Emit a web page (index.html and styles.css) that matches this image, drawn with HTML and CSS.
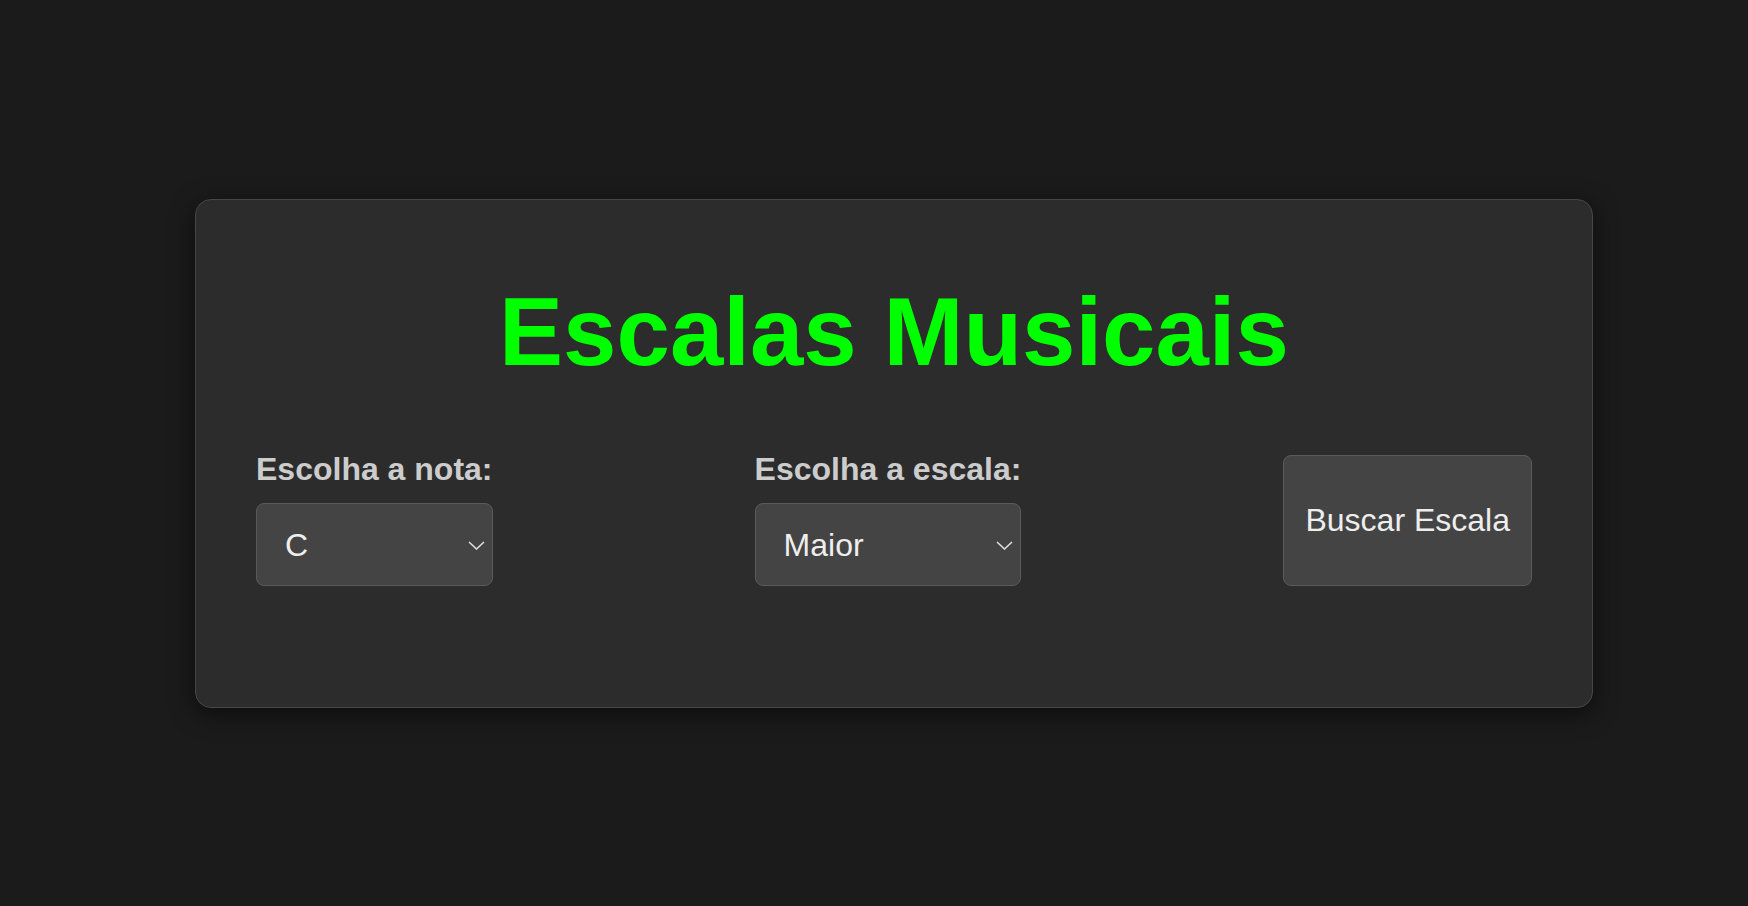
FILE: index.html
```html
<!DOCTYPE html>
<html lang="pt">
<head>
<meta charset="utf-8">
<title>Escalas Musicais</title>
<link rel="stylesheet" href="styles.css">
</head>
<body>
  <main class="card">
    <h1 class="title">Escalas Musicais</h1>
    <div class="controls">
      <div class="field">
        <label class="field-label" for="nota">Escolha a nota:</label>
        <div class="select-wrap">
          <select id="nota" class="field-select">
            <option>C</option>
            <option>C#</option>
            <option>D</option>
            <option>D#</option>
            <option>E</option>
            <option>F</option>
            <option>F#</option>
            <option>G</option>
            <option>G#</option>
            <option>A</option>
            <option>A#</option>
            <option>B</option>
          </select>
          <svg class="chevron" width="17" height="9" viewBox="0 0 17 9" aria-hidden="true"><path d="M1 1 L8.5 8 L16 1" fill="none" stroke="#dcdcdc" stroke-width="1.6"/></svg>
        </div>
      </div>
      <div class="field">
        <label class="field-label" for="escala">Escolha a escala:</label>
        <div class="select-wrap">
          <select id="escala" class="field-select">
            <option>Maior</option>
            <option>Menor</option>
          </select>
          <svg class="chevron" width="17" height="9" viewBox="0 0 17 9" aria-hidden="true"><path d="M1 1 L8.5 8 L16 1" fill="none" stroke="#dcdcdc" stroke-width="1.6"/></svg>
        </div>
      </div>
      <button class="search-btn" type="button">Buscar Escala</button>
    </div>
  </main>
</body>
</html>
```

FILE: styles.css
```css
* {
  box-sizing: border-box;
}

html, body {
  margin: 0;
  height: 100%;
}

body {
  background: #1b1b1b;
  font-family: "Liberation Sans", Arial, sans-serif;
  display: flex;
  align-items: center;
  justify-content: center;
  padding-left: 40px;
  padding-top: 1px;
  min-height: 100vh;
}

.card {
  width: 1398px;
  background: #2c2c2c;
  border: 1px solid #464646;
  border-radius: 16px;
  box-shadow: 0 6px 24px rgba(0, 0, 0, 0.55);
  padding: 77px 60px 121px;
}

.title {
  margin: 0 0 64px;
  text-align: center;
  color: #00ff00;
  font-size: 96px;
  font-weight: bold;
  line-height: normal;
}

.controls {
  display: flex;
  justify-content: space-between;
  align-items: flex-end;
}

.field {
  display: flex;
  flex-direction: column;
  gap: 15px;
}

.field-label {
  color: #cccccc;
  font-size: 32px;
  font-weight: bold;
  line-height: normal;
}

.select-wrap {
  position: relative;
  display: flex;
}

.field-select {
  flex: 1;
  height: 83px;
  padding: 0 28px;
  -webkit-appearance: none;
  appearance: none;
  background-color: #444444;
  color: #eeeeee;
  border: 1px solid #5a5a5a;
  border-radius: 8px;
  font-family: "Liberation Sans", Arial, sans-serif;
  font-size: 32px;
}

.chevron {
  position: absolute;
  right: 8px;
  top: 38px;
  pointer-events: none;
}

.search-btn {
  height: 131px;
  margin-top: 3px;
  padding: 0 21px;
  background: #444444;
  color: #eeeeee;
  border: 1px solid #5a5a5a;
  border-radius: 8px;
  font-family: "Liberation Sans", Arial, sans-serif;
  font-size: 32px;
}
```
